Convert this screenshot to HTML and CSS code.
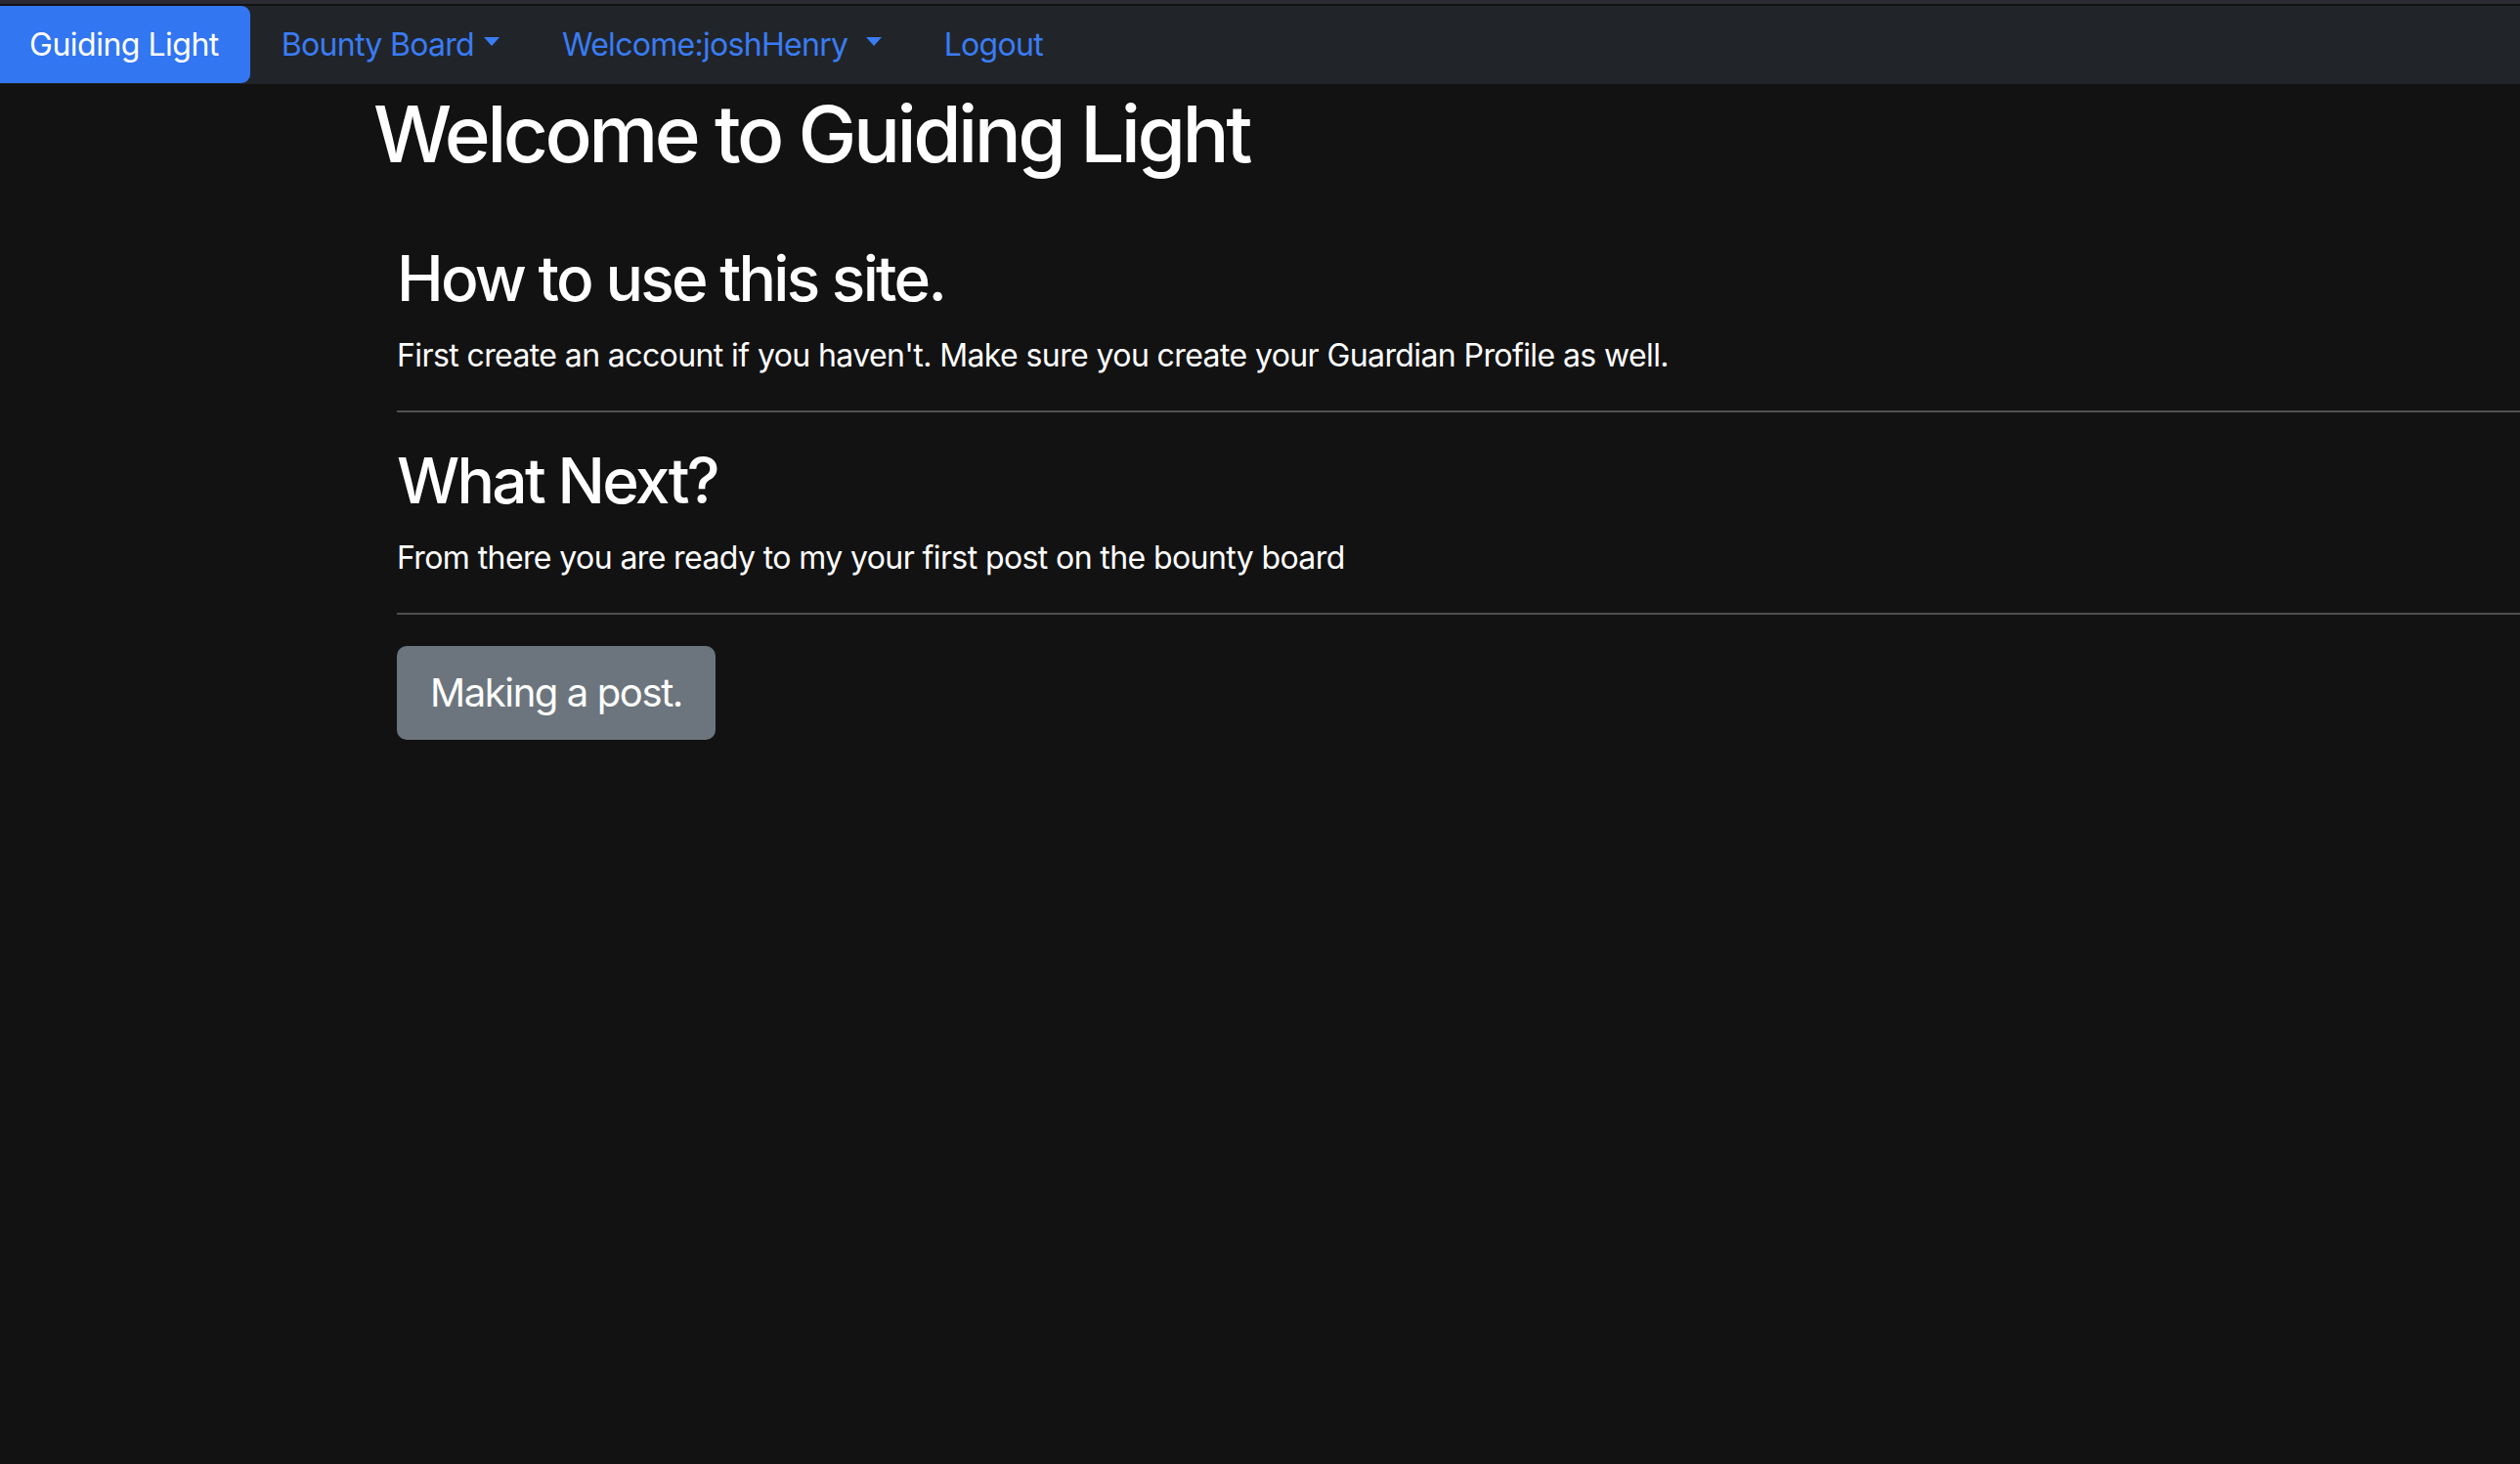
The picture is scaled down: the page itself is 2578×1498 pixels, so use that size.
FILE: index.html
```html
<!DOCTYPE html>
<html lang="en">
<head>
<meta charset="utf-8">
<title>Guiding Light</title>
<link rel="stylesheet" href="styles.css">
</head>
<body>
<div class="topband"></div>
<nav class="navbar">
  <a class="brand" href="#">Guiding Light</a>
  <a class="nav-link" href="#">Bounty Board<span class="caret"></span></a>
  <a class="nav-link" href="#">Welcome:joshHenry <span class="caret"></span></a>
  <a class="nav-link" href="#">Logout</a>
</nav>
<main class="page">
  <h1 class="title">Welcome to Guiding Light</h1>
  <section class="content">
    <h2 class="heading">How to use this site.</h2>
    <p class="text">First create an account if you haven't. Make sure you create your Guardian Profile as well.</p>
    <hr class="rule">
    <h2 class="heading">What Next?</h2>
    <p class="text">From there you are ready to my your first post on the bounty board</p>
    <hr class="rule">
    <a class="btn" href="#">Making a post.</a>
  </section>
</main>
</body>
</html>
```
FILE: styles.css
```css
html, body {
  margin: 0;
  padding: 0;
}
body {
  background: #121212;
  color: #ffffff;
  font-family: Inter, "Liberation Sans", Arial, sans-serif;
  font-size: 32px;
  line-height: 1.5;
  letter-spacing: -0.6px;
  min-height: 1498px;
  overflow-x: hidden;
}
.topband {
  height: 4px;
  background: #2c2a33;
  margin-bottom: 2px;
}
.navbar {
  display: flex;
  align-items: stretch;
  height: 80px;
  background: #212529;
}
.brand {
  display: flex;
  align-items: center;
  padding: 0 32px 0 30px;
  height: 79px;
  background: #3276f2;
  color: #ffffff;
  text-decoration: none;
  font-size: 32px;
  letter-spacing: -0.5px;
  border-radius: 0 9px 9px 0;
}
.nav-link {
  display: flex;
  align-items: center;
  padding: 0 32px;
  color: #3a7cf4;
  text-decoration: none;
  font-size: 32px;
  letter-spacing: -0.7px;
  white-space: pre;
}
.caret {
  display: inline-block;
  width: 0;
  height: 0;
  margin-left: 10px;
  border-top: 9px solid #3a7cf4;
  border-left: 8px solid transparent;
  border-right: 8px solid transparent;
  position: relative;
  top: -4px;
}
.page {
  padding-left: 382px;
}
.title {
  margin: 3px 0 16px;
  font-size: 80px;
  font-weight: 500;
  line-height: 1.2;
  letter-spacing: -0.044em;
}
.content {
  margin: 62px 0 0 24px;
}
.heading {
  margin: 0 0 16px;
  font-size: 64px;
  font-weight: 500;
  line-height: 1.2;
  letter-spacing: -0.042em;
}
.text {
  margin: 0 0 32px;
}
.rule {
  margin: 0 0 32px;
  border: 0;
  border-top: 2px solid #505050;
}
.btn {
  display: inline-block;
  padding: 16px 32px;
  font-size: 40px;
  line-height: 1.5;
  letter-spacing: -0.035em;
  color: #ffffff;
  background: #6c757d;
  border: 2px solid #6c757d;
  border-radius: 10px;
  text-decoration: none;
}
```
